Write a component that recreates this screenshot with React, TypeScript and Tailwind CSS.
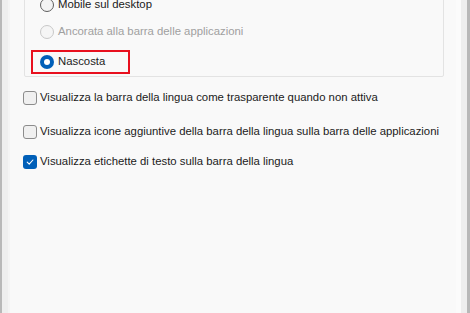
import React from "react";

function Radio({ state }: { state: "off" | "disabled" | "on" }) {
  if (state === "on") {
    return (
      <span className="flex h-[14px] w-[14px] shrink-0 items-center justify-center rounded-full bg-[#005fb8]">
        <span className="h-[6px] w-[6px] rounded-full bg-white" />
      </span>
    );
  }
  return (
    <span
      className={
        state === "disabled"
          ? "h-[14px] w-[14px] shrink-0 rounded-full border border-[#c8c8c8] bg-[#f5f5f5]"
          : "h-[14px] w-[14px] shrink-0 rounded-full border border-[#5e5e5e] bg-[#f3f3f3]"
      }
    />
  );
}

function Check({ checked }: { checked?: boolean }) {
  if (checked) {
    return (
      <span className="flex h-[14px] w-[14px] shrink-0 items-center justify-center rounded-[3px] bg-[#005fb8]">
        <svg width="10" height="10" viewBox="0 0 10 10">
          <path d="M2.2 5.2 L4.2 7.1 L7.9 3" fill="none" stroke="white" strokeWidth="1.1" strokeLinecap="round" strokeLinejoin="round" />
        </svg>
      </span>
    );
  }
  return <span className="h-[14px] w-[14px] shrink-0 rounded-[3px] border border-[#8c8c8c] bg-[#f0f0f0]" />;
}

export default function App() {
  const font = { fontFamily: '"Liberation Sans", Arial, sans-serif' };
  return (
    <div
      className="flex h-[313px] w-[470px] overflow-hidden whitespace-nowrap border-l-2 border-r-[3px] border-[#b8b8b8] bg-[#eeeeee] text-[11.35px] text-[#1b1b1b]"
      style={font}
    >
      <div className="ml-[6px] w-[2px] bg-[#f4f4f4]" />
      <div className="flex flex-1 flex-col bg-[#f9f9f9]">
        <div className="ml-[14px] mt-[-6px] flex w-[420px] flex-col rounded-[2px] border border-[#e3e3e3] pb-[2px]">
          <div className="flex h-[20px] items-center gap-[4px] pl-[15px]">
            <Radio state="off" />
            <span>Mobile sul desktop</span>
          </div>
          <div className="mt-[7px] flex h-[20px] items-center gap-[4px] pl-[15px] text-[#a0a0a0]">
            <Radio state="disabled" />
            <span>Ancorata alla barra delle applicazioni</span>
          </div>
          <div className="ml-[6px] mt-[8px] flex h-[24px] w-[99px] items-center gap-[4px] border-2 border-[#e8101e] pl-[7px]">
            <Radio state="on" />
            <span>Nascosta</span>
          </div>
        </div>
        <div className="ml-[13px] mt-[12px] flex h-[18px] items-center gap-[3px]">
          <Check />
          <span>Visualizza la barra della lingua come trasparente quando non attiva</span>
        </div>
        <div className="ml-[13px] mt-[16px] flex h-[18px] items-center gap-[3px]">
          <Check />
          <span>Visualizza icone aggiuntive della barra della lingua sulla barra delle applicazioni</span>
        </div>
        <div className="ml-[13px] mt-[12px] flex h-[18px] items-center gap-[3px]">
          <Check checked />
          <span>Visualizza etichette di testo sulla barra della lingua</span>
        </div>
      </div>
      <div className="w-[5px] bg-[#fbfbfb]" />
      <div className="w-[6px]" />
    </div>
  );
}
